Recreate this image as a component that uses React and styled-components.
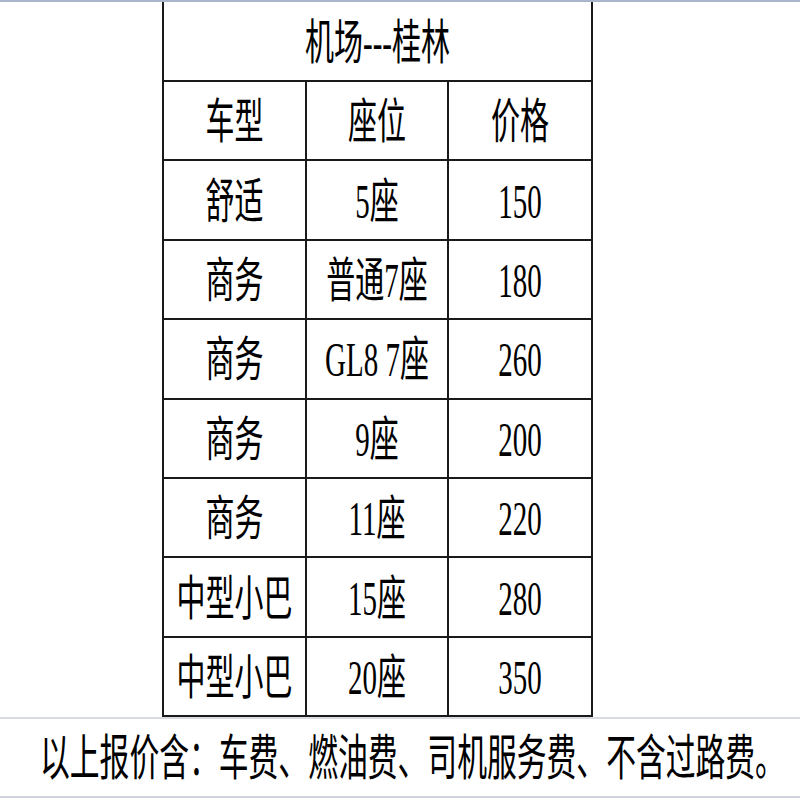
import React from 'react';
import styled, { createGlobalStyle } from 'styled-components';

const rows = [
  ['舒适', '5座', '150'],
  ['商务', '普通7座', '180'],
  ['商务', 'GL8 7座', '260'],
  ['商务', '9座', '200'],
  ['商务', '11座', '220'],
  ['中型小巴', '15座', '280'],
  ['中型小巴', '20座', '350'],
];

const Global = createGlobalStyle`
  html, body {
    margin: 0;
    padding: 0;
    background: #fff;
  }
  body {
    font-family: "Liberation Serif", "Noto Sans CJK SC", serif;
    color: #000;
  }
`;

const Page = styled.div`
  width: 800px;
  height: 800px;
  display: flex;
  flex-direction: column;
  border-top: 2px solid #a9b5cc;
  box-sizing: border-box;
  overflow: hidden;
`;

const Sheet = styled.div`
  margin-left: 162px;
  width: 431px;
  display: grid;
  grid-template-columns: 143px 142px 144px;
  grid-template-rows: 80px repeat(8, 79.4px);
  border-left: 2px solid #1a1a1a;
`;

const Cell = styled.div`
  box-sizing: border-box;
  grid-column: ${p => (p.$span ? `span ${p.$span}` : 'auto')};
  border-right: 2px solid #1a1a1a;
  border-bottom: 2px solid #1a1a1a;
  display: flex;
  align-items: center;
  justify-content: center;
  padding-top: 4px;
  font-size: 29px;
  white-space: pre;
`;

const Tall = styled.span`
  display: inline-block;
  transform: scaleY(1.65);
  line-height: 1;
`;

const Footer = styled.div`
  height: 77px;
  border-top: 2px solid #d9dbe3;
  border-bottom: 2px solid #d0d3dc;
  display: flex;
  align-items: center;
  padding-left: 40px;
  font-size: 29.8px;
  box-sizing: content-box;
`;

export default function App() {
  return (
    <Page>
      <Global />
      <Sheet>
        <Cell $span={3}><Tall>机场---桂林</Tall></Cell>
        <Cell><Tall>车型</Tall></Cell>
        <Cell><Tall>座位</Tall></Cell>
        <Cell><Tall>价格</Tall></Cell>
        {rows.map((r, i) =>
          r.map((v, j) => (
            <Cell key={`${i}-${j}`}><Tall>{v}</Tall></Cell>
          ))
        )}
      </Sheet>
      <Footer>
        <Tall>以上报价含：车费、燃油费、司机服务费、不含过路费。</Tall>
      </Footer>
    </Page>
  );
}
